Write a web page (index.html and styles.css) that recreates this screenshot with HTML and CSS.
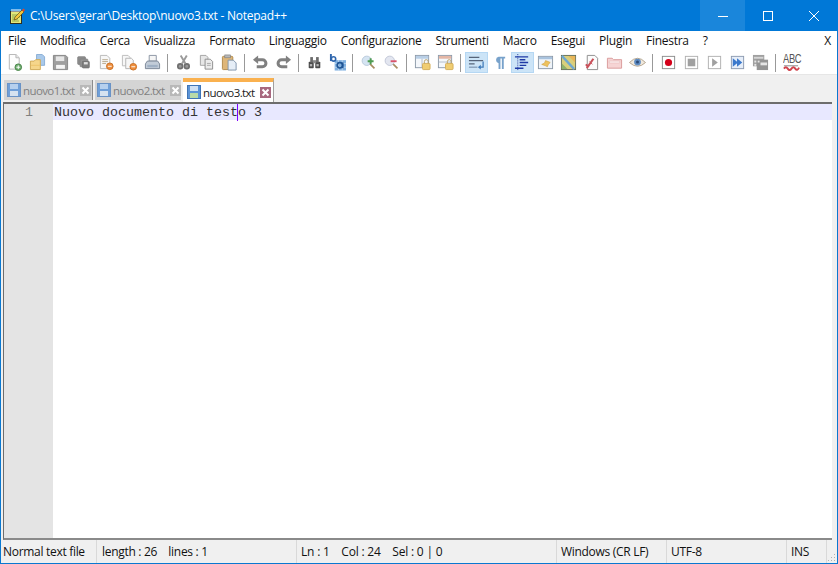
FILE: index.html
```html
<!DOCTYPE html>
<html>
<head>
    <meta charset="UTF-8">
    <title>nuovo3.txt - Notepad++</title>
    <link rel="stylesheet" href="styles.css">
</head>
<body>
    <svg class="sprite" xmlns="http://www.w3.org/2000/svg">
        <symbol id="i-new" viewBox="0 0 18 18"><path d="M3.500 .500h7l3.500 3.500v12h-10.500z" fill="#fdfdfd" stroke="#b4b4b4"/><path d="M10.500 .500v3.500h3.500" fill="#e8e8e8" stroke="#b4b4b4"/><circle cx="13" cy="14" r="3.500" fill="#6cab6c" stroke="#4a854a"/><path d="M11 14h4M13 12v4" stroke="#fff"/></symbol>
        <symbol id="i-open" viewBox="0 0 18 18"><path d="M8 .500h6l2.500 2.500v9h-8.500z" fill="#a9c9ea" stroke="#88add4"/><path d="M1.500 7.500h4l1.500-1.500h5v10.500h-10.500z" fill="#f6d68b" stroke="#cfa956"/><path d="M2 12h10" stroke="#edc36b"/></symbol>
        <symbol id="i-save" viewBox="0 0 18 18"><path d="M1.500 1.500h13l2 2v13h-15z" fill="#9f9f9f" stroke="#858585"/><rect x="4" y="2.500" width="9" height="5" fill="#e6e6e6"/><rect x="4" y="11" width="10" height="5" fill="#f5f5f5" stroke="#8a8a8a" stroke-width=".6"/></symbol>
        <symbol id="i-saveall" viewBox="-2 -2 22 22"><rect x="1.500" y="1.500" width="10" height="10" rx="1" fill="#8c8c8c" stroke="#808080"/><rect x="4.500" y="4.500" width="10" height="10" rx="1" fill="#949494" stroke="#808080"/><rect x="7.500" y="7.500" width="9" height="8.500" rx="1" fill="#7e7e7e" stroke="#707070"/><rect x="9.500" y="8.500" width="5" height="3" fill="#e0e0e0"/></symbol>
        <symbol id="i-close" viewBox="0 0 18 18"><path d="M2.500 1.500h7l3 3v11h-10z" fill="#f7f7f7" stroke="#b8b8b8"/><path d="M4.500 6h6M4.500 8h6M4.500 10h4" stroke="#b9a98c"/><circle cx="12.500" cy="13" r="3.500" fill="#ee8f3e" stroke="#c96f24"/><path d="M10.500 13h4" stroke="#fff"/></symbol>
        <symbol id="i-closeall" viewBox="0 0 18 18"><path d="M1.500 1.500h6l2 2v9h-8z" fill="#f7f7f7" stroke="#bcbcbc"/><path d="M5 4.500h6l2 2v9h-8z" fill="#f7f7f7" stroke="#b4b4b4"/><circle cx="13" cy="13.500" r="3.500" fill="#ee8f3e" stroke="#c96f24"/><path d="M11 13.500h4" stroke="#fff"/></symbol>
        <symbol id="i-print" viewBox="0 0 18 18"><path d="M5.500 1.500h7.500v6h-7.500z" fill="#f5f5f5" stroke="#8a94a3"/><path d="M3.500 7.500h11l2 3v5h-15v-5z" fill="#c2ccd8" stroke="#7b8797"/><rect x="3.500" y="11.500" width="11" height="2.500" fill="#9fb0c4"/></symbol>
        <symbol id="i-cut" viewBox="0 0 18 18"><path d="M12.500 1.500l-5 8.500M6 1.500l5 8.500" stroke="#9a9a9a" stroke-width="2" fill="none"/><circle cx="5.500" cy="13" r="2.500" fill="#9a9a9a" stroke="#707070" stroke-width="1.800"/><circle cx="12.500" cy="13" r="2.500" fill="#9a9a9a" stroke="#707070" stroke-width="1.800"/></symbol>
        <symbol id="i-copy" viewBox="0 0 18 18"><path d="M2.500 1.500h6l2 2v8.500h-8z" fill="#e6e6e6" stroke="#a4a4a4"/><path d="M7.500 5.500h5.500l2.500 2.500v8h-8z" fill="#ebebeb" stroke="#8c8c8c"/><path d="M9.500 10h4M9.500 12h4" stroke="#a8a8a8"/></symbol>
        <symbol id="i-paste" viewBox="0 0 18 18"><rect x="1.500" y="2.500" width="11" height="14" rx="1" fill="#deb679" stroke="#b08a4c"/><rect x="4" y="1" width="6" height="3" fill="#b8b8b8" stroke="#808080" stroke-width=".7"/><path d="M7.500 6.500h5.500l3 3v7.500h-8.500z" fill="#e6eef7" stroke="#7f95ad"/></symbol>
        <symbol id="i-undo" viewBox="0 0 18 18"><path d="M4 6h7a3.500 3.500 0 0 1 0 7.500h-6" fill="none" stroke="#808080" stroke-width="3.200"/><path d="M6.500 1.500l-5.500 4.500 5.500 4.500z" fill="#808080"/></symbol>
        <symbol id="i-redo" viewBox="0 0 18 18"><path d="M14 6h-7a3.500 3.500 0 0 0 0 7.500h6" fill="none" stroke="#808080" stroke-width="3.200"/><path d="M11.500 1.500l5.500 4.500-5.500 4.500z" fill="#808080"/></symbol>
        <symbol id="i-find" viewBox="-2 -2 22 22"><rect x="1.500" y="8" width="6.500" height="8.500" rx="1" fill="#4a4a4a"/><rect x="10" y="8" width="6.500" height="8.500" rx="1" fill="#4a4a4a"/><rect x="3.500" y="2" width="3.500" height="7" fill="#6b6b6b"/><rect x="11" y="2" width="3.500" height="7" fill="#6b6b6b"/><rect x="7" y="6" width="4" height="4" fill="#8a8a8a"/><rect x="3" y="11" width="3" height="3" fill="#b5b5b5"/><rect x="11.500" y="11" width="3" height="3" fill="#b5b5b5"/></symbol>
        <symbol id="i-replace" viewBox="0 0 18 18"><rect x="6" y="6.500" width="12" height="11" fill="#7fb0e0"/><path d="M6 10h12M6 14h12M10 6.500v11M14 6.500v11" stroke="#d5e5f5" stroke-width=".7"/><path d="M2 0v7.500" stroke="#2f66ad" stroke-width="2"/><circle cx="4.800" cy="5.200" r="2.300" fill="none" stroke="#2f66ad" stroke-width="1.700"/><circle cx="11.500" cy="12" r="2.800" fill="none" stroke="#1f5596" stroke-width="1.800"/><path d="M14.500 9v6" stroke="#1f5596" stroke-width="1.800"/></symbol>
        <symbol id="i-zoomin" viewBox="-1 -1 20 20"><circle cx="7" cy="7" r="5.500" fill="#d5e4f2" stroke="#b3c5d8"/><path d="M11 11l5 5" stroke="#a98d63" stroke-width="2"/><path d="M8 7.500h7M11.500 4v7" stroke="#4f9d52" stroke-width="2.200"/></symbol>
        <symbol id="i-zoomout" viewBox="-1 -1 20 20"><circle cx="7" cy="7" r="5.500" fill="#e3e6f0" stroke="#bcc2d3"/><path d="M11 11l5 5" stroke="#a98d63" stroke-width="2"/><path d="M8 7.500h7" stroke="#d9536b" stroke-width="2.200"/></symbol>
        <symbol id="i-syncv" viewBox="0 0 18 18"><rect x="1.500" y="1.500" width="14" height="13" fill="#f4f7fb" stroke="#8d9aa9"/><rect x="2" y="2" width="13" height="3" fill="#b9cfe6"/><path d="M8.500 5v9" stroke="#b0bcc9"/><rect x="9" y="10" width="8" height="6.500" rx="1" fill="#f0cd72" stroke="#d4ae5a"/><path d="M11 10V8a2 2 0 0 1 4 0v2" fill="none" stroke="#b9a066"/></symbol>
        <symbol id="i-synch" viewBox="0 0 18 18"><rect x="1.500" y="1.500" width="14" height="13" fill="#f4f7fb" stroke="#8d9aa9"/><rect x="2" y="2" width="13" height="3" fill="#e4b7a6"/><path d="M2 8.500h13" stroke="#b0bcc9"/><rect x="9" y="10" width="8" height="6.500" rx="1" fill="#f0cd72" stroke="#d4ae5a"/><path d="M11 10V8a2 2 0 0 1 4 0v2" fill="none" stroke="#b9a066"/></symbol>
        <symbol id="i-wrap" viewBox="0 0 18 18"><path d="M1 3.500h11M1 7h15M1 10.500h6" stroke="#56647a" stroke-width="1.300"/><path d="M1 14h9" stroke="#8ea6c0" stroke-width="1.600"/><path d="M16 8v6h-4" stroke="#3d78b8" stroke-width="1.300" fill="none"/><path d="M13.500 11.500l-3 2.500 3 2.500z" fill="#3d78b8"/></symbol>
        <symbol id="i-para" viewBox="0 0 18 18"><path d="M8 3h7v1.800h-1.500v11h-2v-11h-1.500v11h-2v-6a3.500 3.500 0 0 1 0-6.800z" fill="#78a2cb"/></symbol>
        <symbol id="i-indent" viewBox="0 0 18 18"><path d="M4 0v18" stroke="#2c3f9e" stroke-dasharray="1 1"/><path d="M1 3h14M6 6h6M6 9h9M6 12h7M1 15h9" stroke="#1f3aa6" stroke-width="1.500"/></symbol>
        <symbol id="i-lang" viewBox="0 0 18 18"><rect x="1.500" y="2.500" width="15" height="13" fill="#eef3f9" stroke="#8d9aa9"/><rect x="2" y="3" width="14" height="2.500" fill="#a9c3de"/><path d="M5 11l3-1.500 1-2.500 3 1 2 1-2 2-1 2.500-2-1z" fill="#eec25e" stroke="#cd9f3d" stroke-width=".6"/></symbol>
        <symbol id="i-map" viewBox="0 0 18 18"><rect x="1.500" y="1.500" width="15" height="15" fill="#d9cf7c" stroke="#66705a"/><path d="M2 2l13 14" stroke="#6fa8d0" stroke-width="2.400"/><path d="M9 2h7v7z" fill="#e9b659"/><path d="M2 10l6 6h-6z" fill="#8fb26b"/></symbol>
        <symbol id="i-func" viewBox="0 0 18 18"><path d="M4.500 1.500h8l3 3v12h-11z" fill="#fbfbfb" stroke="#8c8c8c"/><path d="M4 15l7-10M3 11l3 3" stroke="#c9505a" stroke-width="2.200"/><path d="M7 8l3 3" stroke="#c9505a"/></symbol>
        <symbol id="i-folder" viewBox="0 0 18 18"><path d="M1.500 4.500h5l1.500 1.500h8.500v9h-15z" fill="#f6d4d4" stroke="#d99a9a"/><path d="M3.500 7.500h11v2h-11z" fill="#fdf0f0" stroke="#e3b3b3" stroke-width=".5"/></symbol>
        <symbol id="i-eye" viewBox="0 0 18 18"><path d="M.500 9q8.500-9 17 0q-8.500 8-17 0z" fill="#f0e8dc" stroke="#b3a48e"/><circle cx="9" cy="8.500" r="3.600" fill="#5e8cc2"/><circle cx="9" cy="8.500" r="1.600" fill="#2b4a78"/></symbol>
        <symbol id="i-rec" viewBox="0 0 18 18"><rect x="2.500" y="2.500" width="13" height="13" fill="#fff" stroke="#8c8c8c"/><circle cx="9" cy="9" r="3.800" fill="#d4001a"/></symbol>
        <symbol id="i-stop" viewBox="0 0 18 18"><rect x="2.500" y="2.500" width="13" height="13" fill="#fff" stroke="#b0b0b0"/><rect x="5" y="5" width="8" height="8" fill="#a0a0a0"/></symbol>
        <symbol id="i-play" viewBox="0 0 18 18"><rect x="2.500" y="2.500" width="13" height="13" fill="#fff" stroke="#b0b0b0"/><path d="M6.500 4.500l6 4.500-6 4.500z" fill="#a0a0a0"/></symbol>
        <symbol id="i-fast" viewBox="0 0 18 18"><rect x="2.500" y="2.500" width="13" height="13" fill="#e6eef9" stroke="#8c9bb0"/><path d="M4 4.500l5.500 4.500-5.500 4.500zM8.500 4.500l5.500 4.500-5.500 4.500z" fill="#3a78cc"/></symbol>
        <symbol id="i-savemacro" viewBox="0 0 18 18"><rect x="1" y="1" width="12" height="12" fill="#a0a0a0"/><rect x="5" y="6" width="12" height="11" fill="#949494"/><rect x="2" y="3" width="10" height="2" fill="#d5d5d5"/><rect x="2.500" y="7" width="2" height="2" fill="#e5e5e5"/><rect x="6" y="7" width="2" height="2" fill="#e5e5e5"/><rect x="9" y="9" width="7" height="3" fill="#e5e5e5"/><rect x="2.500" y="10.500" width="2" height="2" fill="#e5e5e5"/></symbol>
        <symbol id="i-spell" viewBox="0 0 18 18"><path d="M1 12.500h15" stroke="#666" stroke-width=".8"/><path d="M1 15.500q2-3 4 0t4 0t4 0t4-1" fill="none" stroke="#d0434c" stroke-width="2"/></symbol>
        <symbol id="i-tabfile" viewBox="0 0 14 14"><rect x=".5" y=".5" width="13" height="13" fill="#6f9fd8" stroke="#6a93c6"/><rect x="3" y="1" width="8" height="5" fill="#b6d0ee"/><rect x="3" y="8" width="8" height="5" fill="#d5e2f0"/></symbol>
        <symbol id="i-tabcur" viewBox="0 0 14 14"><rect x=".5" y=".5" width="13" height="13" fill="#5b93d6" stroke="#3f74b5"/><rect x="3" y="1" width="8" height="5" fill="#cfe0f3"/><rect x="3" y="8" width="8" height="5" fill="#b9d9a8"/></symbol>
        <symbol id="i-tabx" viewBox="0 0 11 11"><path d="M2.500 2.500l6 6M8.500 2.500l-6 6" stroke="#fff" stroke-width="2"/></symbol>
    </svg>

    <div class="window">
        <div class="titlebar">
            <svg class="app-icon" viewBox="0 0 16 16" width="16" height="16">
                <rect x="1.500" y="3.500" width="11" height="12" fill="#e3e77a" stroke="#2e2e20"/>
                <path d="M3 1v3M5 1v3M7 1v3M9 1v3M11 1v3" stroke="#fff"/>
                <path d="M3 7h8M3 9h8M3 11h6M3 13h7" stroke="#8fa84a"/>
                <path d="M5 12l1-3 7-7 2 2-7 7z" fill="#f0c63c" stroke="#4d3c0a" stroke-width=".6"/>
                <path d="M13 2l1.500-1.500 1.500 1.500-1.500 2z" fill="#e0462a"/>
            </svg>
            <span class="title-text">C:\Users\gerar\Desktop\nuovo3.txt - Notepad++</span>
            <div class="win-buttons">
                <div class="win-btn hovered"><svg width="10" height="10" viewBox="0 0 10 10"><path d="M0 5.500h10" stroke="#fff"/></svg></div>
                <div class="win-btn"><svg width="10" height="10" viewBox="0 0 10 10"><rect x=".5" y=".5" width="9" height="9" fill="none" stroke="#fff"/></svg></div>
                <div class="win-btn"><svg width="10" height="10" viewBox="0 0 10 10"><path d="M0 0l10 10M10 0l-10 10" stroke="#fff"/></svg></div>
            </div>
        </div>

        <div class="menubar">
            <span class="menu-item">File</span>
            <span class="menu-item">Modifica</span>
            <span class="menu-item">Cerca</span>
            <span class="menu-item">Visualizza</span>
            <span class="menu-item">Formato</span>
            <span class="menu-item">Linguaggio</span>
            <span class="menu-item">Configurazione</span>
            <span class="menu-item">Strumenti</span>
            <span class="menu-item">Macro</span>
            <span class="menu-item">Esegui</span>
            <span class="menu-item">Plugin</span>
            <span class="menu-item">Finestra</span>
            <span class="menu-item">?</span>
            <span class="menu-close">X</span>
        </div>

        <div class="toolbar">
            <span class="tool"><svg><use href="#i-new"/></svg></span>
            <span class="tool"><svg><use href="#i-open"/></svg></span>
            <span class="tool"><svg><use href="#i-save"/></svg></span>
            <span class="tool"><svg><use href="#i-saveall"/></svg></span>
            <span class="tool"><svg><use href="#i-close"/></svg></span>
            <span class="tool"><svg><use href="#i-closeall"/></svg></span>
            <span class="tool"><svg><use href="#i-print"/></svg></span>
            <span class="tool-sep"></span>
            <span class="tool"><svg><use href="#i-cut"/></svg></span>
            <span class="tool"><svg><use href="#i-copy"/></svg></span>
            <span class="tool"><svg><use href="#i-paste"/></svg></span>
            <span class="tool-sep"></span>
            <span class="tool"><svg><use href="#i-undo"/></svg></span>
            <span class="tool"><svg><use href="#i-redo"/></svg></span>
            <span class="tool-sep"></span>
            <span class="tool"><svg><use href="#i-find"/></svg></span>
            <span class="tool"><svg><use href="#i-replace"/></svg></span>
            <span class="tool-sep"></span>
            <span class="tool"><svg><use href="#i-zoomin"/></svg></span>
            <span class="tool"><svg><use href="#i-zoomout"/></svg></span>
            <span class="tool-sep"></span>
            <span class="tool"><svg><use href="#i-syncv"/></svg></span>
            <span class="tool"><svg><use href="#i-synch"/></svg></span>
            <span class="tool-sep"></span>
            <span class="tool active"><svg><use href="#i-wrap"/></svg></span>
            <span class="tool"><svg><use href="#i-para"/></svg></span>
            <span class="tool active"><svg><use href="#i-indent"/></svg></span>
            <span class="tool"><svg><use href="#i-lang"/></svg></span>
            <span class="tool"><svg><use href="#i-map"/></svg></span>
            <span class="tool"><svg><use href="#i-func"/></svg></span>
            <span class="tool"><svg><use href="#i-folder"/></svg></span>
            <span class="tool"><svg><use href="#i-eye"/></svg></span>
            <span class="tool-sep"></span>
            <span class="tool"><svg><use href="#i-rec"/></svg></span>
            <span class="tool"><svg><use href="#i-stop"/></svg></span>
            <span class="tool"><svg><use href="#i-play"/></svg></span>
            <span class="tool"><svg><use href="#i-fast"/></svg></span>
            <span class="tool"><svg><use href="#i-savemacro"/></svg></span>
            <span class="tool-sep"></span>
            <span class="tool"><span class="abc">ABC</span><svg><use href="#i-spell"/></svg></span>
        </div>

        <div class="tabbar">
            <div class="tab first">
                <svg class="tab-save"><use href="#i-tabfile"/></svg>
                <span class="tab-name">nuovo1.txt</span>
                <span class="tab-x"><svg><use href="#i-tabx"/></svg></span>
            </div>
            <div class="tab">
                <svg class="tab-save"><use href="#i-tabfile"/></svg>
                <span class="tab-name">nuovo2.txt</span>
                <span class="tab-x"><svg><use href="#i-tabx"/></svg></span>
            </div>
            <div class="tab current">
                <svg class="tab-save"><use href="#i-tabcur"/></svg>
                <span class="tab-name">nuovo3.txt</span>
                <span class="tab-x"><svg><use href="#i-tabx"/></svg></span>
            </div>
        </div>

        <div class="editor">
            <div class="gutter"><div class="line-no">1</div></div>
            <div class="text-area">
                <div class="current-line">Nuovo documento di testo 3<span class="caret"></span></div>
            </div>
        </div>

        <div class="statusbar">
            <div class="status-cell type">Normal text file</div>
            <div class="status-cell length">length : 26&nbsp;&nbsp;&nbsp; lines : 1</div>
            <div class="status-cell pos">Ln : 1 &nbsp;&nbsp; Col : 24 &nbsp;&nbsp; Sel : 0 | 0</div>
            <div class="status-cell eol">Windows (CR LF)</div>
            <div class="status-cell enc">UTF-8</div>
            <div class="status-cell ins">INS</div>
            <svg class="grip" width="10" height="10" viewBox="0 0 10 10">
                <path d="M8 1h1v1h-1zM5 4h1v1h-1zM8 4h1v1h-1zM2 7h1v1h-1zM5 7h1v1h-1zM8 7h1v1h-1z" fill="#b0b0b0"/>
            </svg>
        </div>
    </div>
</body>
</html>
```

FILE: styles.css
```css
html, body {
    margin: 0;
    padding: 0;
    overflow: hidden;
}
.sprite {
    display: none;
}
.window {
    width: 838px;
    height: 564px;
    box-sizing: border-box;
    display: flex;
    flex-direction: column;
    background-color: #f0f0f0;
    border: 1px solid #0a78d0;
    border-top: none;
    font-family: "Open Sans", "Noto Sans", sans-serif;
    font-size: 12px;
    color: #111;
}

/* title bar */
.titlebar {
    height: 31px;
    margin: 0 -1px;
    display: flex;
    align-items: center;
    background-color: #0078d7;
    color: #fff;
    flex-shrink: 0;
}
.app-icon {
    margin-left: 9px;
    margin-right: 5px;
}
.title-text {
    font-size: 12px;
    letter-spacing: -0.26px;
}
.win-buttons {
    margin-left: auto;
    display: flex;
    margin-right: 1px;
}
.win-btn {
    width: 46px;
    height: 31px;
    display: flex;
    align-items: center;
    justify-content: center;
}
.win-btn.hovered {
    width: 45px;
    background-color: #1a86db;
}

/* menu */
.menubar {
    height: 19px;
    display: flex;
    align-items: center;
    gap: 14px;
    padding-left: 7px;
    background-color: #fff;
    letter-spacing: -0.27px;
    flex-shrink: 0;
}
.menu-close {
    margin-left: auto;
    margin-right: 6px;
}

/* toolbar */
.toolbar {
    height: 24px;
    display: flex;
    align-items: center;
    padding-left: 2px;
    background-color: #fff;
    border-bottom: 1px solid #e6e6e6;
    flex-shrink: 0;
}
.tool {
    width: 23px;
    height: 21px;
    box-sizing: border-box;
    display: flex;
    align-items: center;
    justify-content: center;
    position: relative;
}
.tool svg {
    width: 17px;
    height: 17px;
}
.tool.active {
    background-color: #cce4f7;
    border: 1px solid #b5d7f3;
}
.tool-sep {
    width: 8px;
    height: 23px;
    flex-shrink: 0;
}
.tool-sep::after {
    content: "";
    display: block;
    width: 1px;
    height: 18px;
    margin: 3px 0 0 3px;
    background-color: #999;
}
.abc {
    position: absolute;
    left: 3px;
    top: -1px;
    font-family: "Liberation Sans", sans-serif;
    font-size: 13px;
    letter-spacing: -0.5px;
    color: #555;
    transform: scaleX(0.72);
    transform-origin: left center;
}

/* tabs */
.tabbar {
    height: 27px;
    display: flex;
    align-items: flex-end;
    gap: 2px;
    padding-left: 3px;
    flex-shrink: 0;
}
.tab {
    width: 86px;
    height: 20px;
    margin-bottom: 2px;
    box-sizing: border-box;
    display: flex;
    align-items: center;
    padding-left: 2px;
    background-color: #d4d4d4;
    color: #808080;
}
.tab.first {
    width: 89px;
    padding-left: 3px;
    border-right: 1px solid #8c8c8c;
}
.tab.current {
    width: 91px;
    height: 24px;
    margin-bottom: 0;
    padding-left: 4px;
    background-color: #fff;
    border-top: 4px solid #fab14f;
    border-right: 1px solid #a0a0a0;
    color: #222;
}
.tab-save {
    width: 14px;
    height: 14px;
    margin-right: 2px;
}
.tab-name {
    font-size: 11.5px;
    letter-spacing: -0.6px;
}
.tab-x {
    width: 11px;
    height: 11px;
    margin-left: 5px;
    background-color: #b8b8b8;
}
.tab-x svg {
    display: block;
    width: 11px;
    height: 11px;
}
.tab.current .tab-x {
    background-color: #a8687f;
}

/* editor */
.editor {
    flex: 1;
    min-height: 0;
    margin: 0 5px 0 2px;
    display: flex;
    background-color: #fff;
    border-top: 2px solid #6d6d6d;
    border-left: 1px solid #6d6d6d;
    border-bottom: 2px solid #8a8a8a;
}
.gutter {
    width: 49px;
    background-color: #e4e4e4;
    flex-shrink: 0;
}
.line-no {
    height: 16px;
    line-height: 17px;
    padding-right: 20px;
    text-align: right;
    font-family: "Liberation Mono", monospace;
    font-size: 13.33px;
    color: #808080;
}
.text-area {
    flex: 1;
}
.current-line {
    height: 16px;
    line-height: 17px;
    padding-left: 1px;
    background-color: #e8e8ff;
    font-family: "Liberation Mono", monospace;
    font-size: 13.33px;
    color: #333;
    position: relative;
}
.caret {
    position: absolute;
    left: 184px;
    top: 0;
    width: 1px;
    height: 17px;
    background-color: #8000ff;
}

/* status bar */
.statusbar {
    height: 23px;
    display: flex;
    align-items: center;
    flex-shrink: 0;
    font-size: 12px;
    letter-spacing: -0.3px;
    position: relative;
}
.status-cell {
    height: 23px;
    line-height: 24px;
    box-sizing: border-box;
    padding-left: 2px;
    border-right: 1px solid #d9d9d9;
    white-space: nowrap;
}
.type { width: 96px; }
.length { width: 200px; padding-left: 5px; }
.pos { width: 260px; padding-left: 4px; letter-spacing: -0.2px; }
.eol { width: 110px; padding-left: 4px; }
.enc { width: 120px; padding-left: 4px; }
.ins { width: 40px; padding-left: 4px; }
.grip {
    position: absolute;
    right: 1px;
    bottom: 0;
}
```
